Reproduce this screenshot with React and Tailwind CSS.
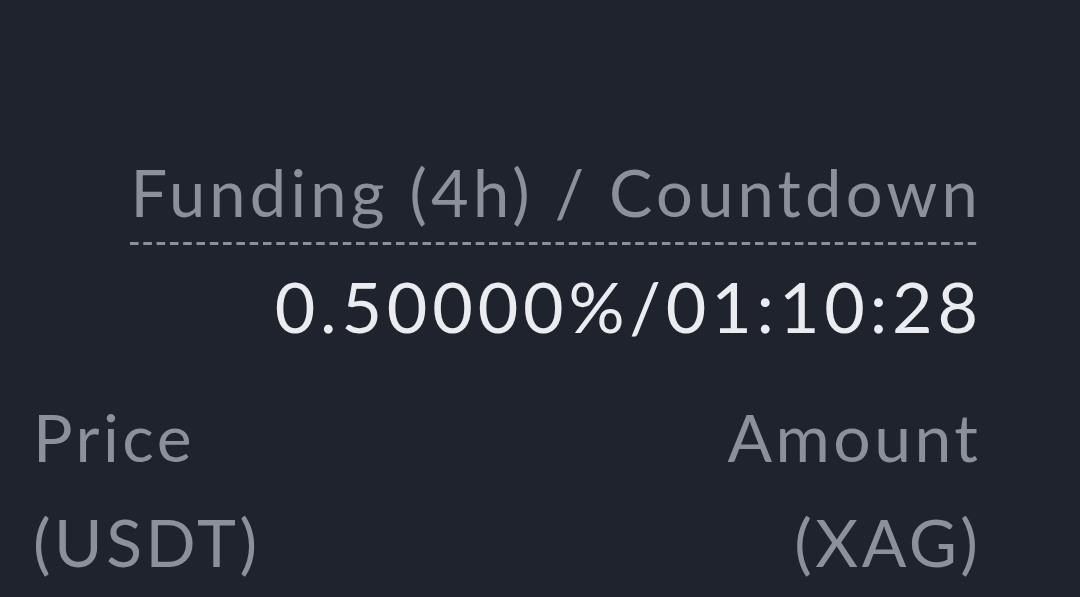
import React from 'react';

const App = () => {
  return (
    <div className="w-[1080px] h-[597px] overflow-hidden bg-[#1e232e] pl-[33px] pr-[102px] pt-[153px] font-['Lato',sans-serif]">
      <div className="flex flex-col items-end">
        <div className="flex flex-col items-end">
          <span className="-mr-[4px] text-[65px] leading-[78px] tracking-[4.2px] text-[#8b909a]">
            Funding (4h) / Countdown
          </span>
          <div className="mt-[11px] h-[3px] w-full bg-[linear-gradient(to_right,#8b909a_65%,transparent_65%)] bg-[length:13.3px_3px]" />
        </div>
        <span className="-mr-[4.8px] mt-[19px] text-[70px] leading-[84px] tracking-[4.8px] text-[#eaecef]">
          0.50000%/01:10:28
        </span>
      </div>
      <div className="mt-[36px] flex justify-between text-[66px] leading-[105px] tracking-[3.5px] text-[#8b909a]">
        <div>
          <div>Price</div>
          <div>(USDT)</div>
        </div>
        <div className="-mr-[3.5px] text-right">
          <div>Amount</div>
          <div>(XAG)</div>
        </div>
      </div>
    </div>
  );
};

export default App;
